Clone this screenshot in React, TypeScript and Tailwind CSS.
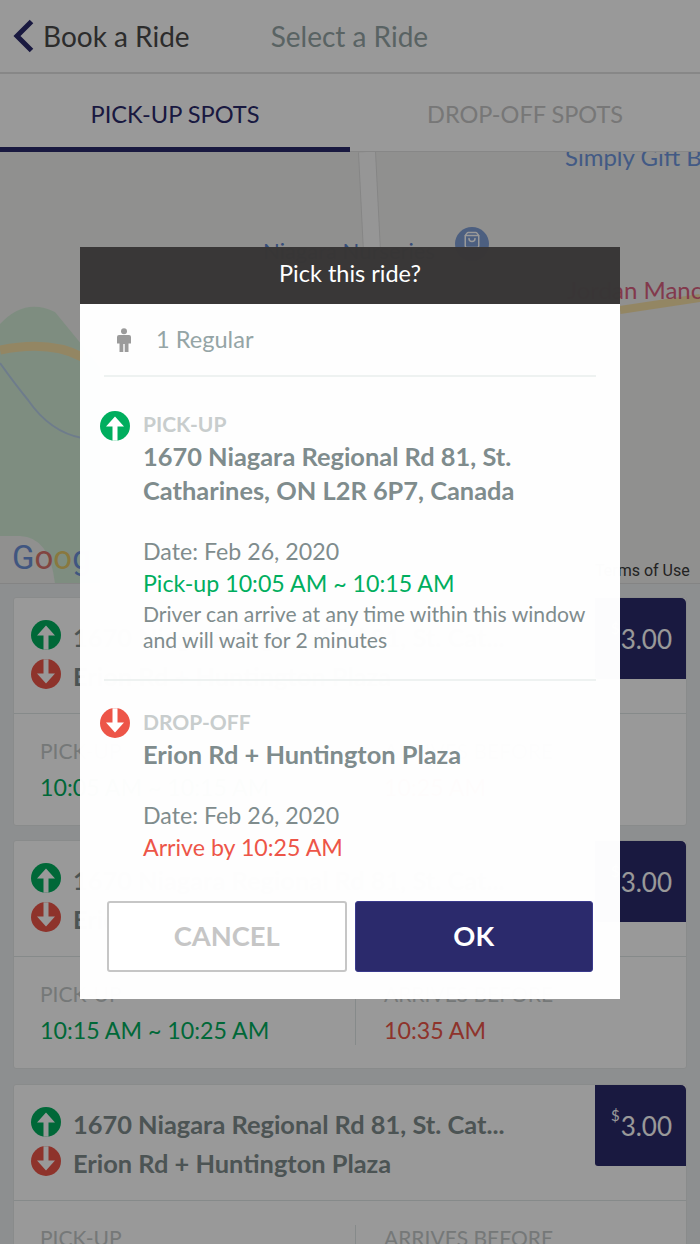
import { ShoppingBag } from 'lucide-react';

const lato = { fontFamily: 'Lato, "Noto Sans", sans-serif' };

function PickupIcon({ size = 30 }: { size?: number }) {
  return (
    <svg width={size} height={size} viewBox="0 0 30 30" className="shrink-0">
      <circle cx="15" cy="15" r="15" fill="#00ae5e" />
      <path d="M15 5.5 L24 15.5 H17.5 V29.8 H12.5 V15.5 H6 Z" fill="#fff" />
    </svg>
  );
}

function DropoffIcon({ size = 30 }: { size?: number }) {
  return (
    <svg width={size} height={size} viewBox="0 0 30 30" className="shrink-0">
      <circle cx="15" cy="15" r="15" fill="#ed5548" />
      <path d="M15 24.5 L24 14.5 H17.5 V0.2 H12.5 V14.5 H6 Z" fill="#fff" />
    </svg>
  );
}

function PersonIcon() {
  return (
    <svg width="16" height="24" viewBox="0 0 16 24" fill="#9b9b9b">
      <circle cx="8" cy="3.2" r="3" />
      <path d="M3 7 H13 A2 2 0 0 1 15 9 V15.5 H12.5 V24 H8.7 V16 H7.3 V24 H3.5 V15.5 H1 V9 A2 2 0 0 1 3 7 Z" />
    </svg>
  );
}

function RideCard({ time, arrive, className }: { time: string; arrive: string; className: string }) {
  return (
    <div className={`mx-[13px] bg-white rounded-[3px] shrink-0 h-[229px] flex flex-col border border-[#e4e8e8] ${className}`}>
      <div className="h-[116px] flex justify-between border-b border-[#dfe6e6] shrink-0">
        <div className="pl-[17px] pt-[22px] flex flex-col gap-[9px]">
          <div className="flex items-center gap-[12px]">
            <PickupIcon />
            <span className="h-[30px] text-[25.4px] leading-[34px] font-bold text-[#7f8c8d] whitespace-nowrap">1670 Niagara Regional Rd 81, St. Cat...</span>
          </div>
          <div className="flex items-center gap-[12px]">
            <DropoffIcon />
            <span className="h-[30px] text-[25.4px] leading-[34px] font-bold text-[#7f8c8d] whitespace-nowrap">Erion Rd + Huntington Plaza</span>
          </div>
        </div>
        <div className="w-[91px] h-[81px] bg-[#2b2a6c] rounded-tr-[5px] rounded-bl-[3px] flex items-center justify-center pt-[2px] pl-[2px] text-white text-[26px] shrink-0">
          <sup className="text-[15px] -mt-[8px] mr-[1px]">$</sup>3.00
        </div>
      </div>
      <div className="flex pt-[24px] pb-[24px] flex-1">
        <div className="w-[342px] pl-[26px] border-r border-[#dfe6e6]">
          <div className="text-[21px] leading-[26px] text-[#c4c9c9]">PICK-UP</div>
          <div className="text-[23.2px] leading-[30px] mt-[8px] text-[#00ae5e] whitespace-nowrap">{time}</div>
        </div>
        <div className="pl-[28px]">
          <div className="text-[21px] leading-[26px] text-[#c4c9c9]">ARRIVES BEFORE</div>
          <div className="text-[23.2px] leading-[30px] mt-[8px] text-[#ed5548]">{arrive}</div>
        </div>
      </div>
    </div>
  );
}

function MapArea() {
  return (
    <div className="relative h-[432px] bg-[#f0f0ee] overflow-hidden border-b border-[#dcdcdc]">
      <svg width="700" height="432" className="absolute inset-0">
        <path d="M0 172 Q25 145 55 160 L100 215 V432 H55 Q50 385 20 384 H0 Z" fill="#d2ecd6" />
        <path d="M0 198 Q50 188 82 205" stroke="#f6dfa6" strokeWidth="9" fill="none" />
        <path d="M0 211 Q15 232 28 248 Q50 280 82 286" stroke="#b8cfe8" strokeWidth="2" fill="none" />
        <path d="M620 158 L700 146" stroke="#f6dfa6" strokeWidth="8" fill="none" />
        <path d="M367 0 L372 100" stroke="#dedede" strokeWidth="18" fill="none" />
        <path d="M367 0 L372 100" stroke="#fbfbfb" strokeWidth="16" fill="none" />
        <circle cx="472" cy="92" r="17" fill="#7f9ed6" />
      </svg>
      <ShoppingBag className="absolute left-[463px] top-[79px] text-white" size={18} />
      <span className="absolute left-[565px] -top-[9px] text-[24px] leading-[28px] text-[#6f97de] whitespace-nowrap">Simply Gift B</span>
      <span className="absolute left-[263px] top-[86px] text-[22px] leading-[26px] text-[#5b82cc] whitespace-nowrap">Niagara Nurseries</span>
      <span className="absolute left-[567px] top-[124px] text-[24px] leading-[28px] text-[#d9607f] whitespace-nowrap">Jordan Manc</span>
      <span className="absolute left-[12px] top-[387px] text-[33px] leading-[38px] whitespace-nowrap" style={{ fontFamily: 'Roboto, sans-serif' }}>
        <span className="text-[#6b8fd6]">G</span>
        <span className="text-[#d9736b]">o</span>
        <span className="text-[#e5c868]">o</span>
        <span className="text-[#6b8fd6]">g</span>
      </span>
      <span className="absolute left-[595px] top-[408px] text-[16px] leading-[22px] text-[#3a3a3a] whitespace-nowrap" style={{ fontFamily: 'Roboto, sans-serif' }}>Terms of Use</span>
    </div>
  );
}

export default function App() {
  return (
    <div className="relative w-[700px] h-[1244px] overflow-hidden bg-[#eceef0]" style={lato}>
      {/* page under the dialog */}
      <div className="h-[74px] bg-white border-b-2 border-[#e2e2e2] flex items-center">
        <svg width="22" height="34" viewBox="0 0 22 34" className="ml-[13px] mb-[1px]">
          <path d="M18.5 2.5 L4 17 L18.5 31.5" fill="none" stroke="#2b2a6c" strokeWidth="5" />
        </svg>
        <span className="ml-[8px] text-[28px] text-[#4a4a4a] whitespace-nowrap">Book a Ride</span>
        <span className="ml-[81px] text-[28px] text-[#95a5a6] whitespace-nowrap">Select a Ride</span>
      </div>
      <div className="h-[78px] bg-white flex border-b border-[#e2e2e2]">
        <div className="w-[350px] border-b-[5px] border-[#2b2a6c] -mb-px flex items-center justify-center pt-[9px] text-[23.6px] text-[#2b2a6c]">PICK-UP SPOTS</div>
        <div className="w-[350px] flex items-center justify-center pt-[4px] text-[23.5px] text-[#c6c6c6]">DROP-OFF SPOTS</div>
      </div>
      <MapArea />
      <div className="pt-[13px]">
        <RideCard time="10:05 AM ~ 10:15 AM" arrive="10:25 AM" className="mb-[14px]" />
        <RideCard time="10:15 AM ~ 10:25 AM" arrive="10:35 AM" className="mb-[15px]" />
        <RideCard time="10:25 AM ~ 10:35 AM" arrive="10:45 AM" className="mb-[14px]" />
      </div>

      {/* overlay + dialog */}
      <div className="absolute inset-0 bg-black/40" />
      <div className="absolute left-[80px] top-[247px] w-[540px] h-[752px] flex flex-col">
        <div className="h-[57px] shrink-0 bg-[#383636]/[0.99] flex items-center justify-center pb-[4px] text-white text-[23.5px]">Pick this ride?</div>
        <div className="flex-1 bg-white/[0.99] px-[24px] flex flex-col">
          <div className="h-[73px] border-b-2 border-[#eef2f1] flex items-center shrink-0">
            <div className="ml-[12px] w-[16px] flex"><PersonIcon /></div>
            <span className="ml-[24px] text-[23.6px] text-[#95a5a6]">1 Regular</span>
          </div>
          <div className="h-[304px] border-b-2 border-[#eef2f1] shrink-0 flex pt-[34px]">
            <div className="-ml-[4px] w-[43px] shrink-0"><PickupIcon /></div>
            <div>
              <div className="text-[21px] leading-[26px] font-bold text-[#c8cdcd]">PICK-UP</div>
              <div className="text-[25.4px] leading-[34px] font-bold text-[#7f8c8d] mt-[2px] w-[400px]">1670 Niagara Regional Rd 81, St. Catharines, ON L2R 6P7, Canada</div>
              <div className="text-[23.2px] leading-[32px] text-[#7f8c8d] mt-[28px]">Date: Feb 26, 2020</div>
              <div className="text-[23.2px] leading-[32px] text-[#00ae5e]">Pick-up 10:05 AM ~ 10:15 AM</div>
              <div className="text-[21.15px] leading-[26px] text-[#7f8c8d] mt-[2px] whitespace-nowrap">Driver can arrive at any time within this window<br />and will wait for 2 minutes</div>
            </div>
          </div>
          <div className="flex pt-[27px] shrink-0">
            <div className="-ml-[4px] w-[43px] shrink-0"><DropoffIcon /></div>
            <div className="pt-[1px]">
              <div className="text-[21px] leading-[26px] font-bold text-[#c8cdcd]">DROP-OFF</div>
              <div className="text-[25.4px] leading-[34px] font-bold text-[#7f8c8d] mt-[2px]">Erion Rd + Huntington Plaza</div>
              <div className="text-[23.2px] leading-[32px] text-[#7f8c8d] mt-[28px]">Date: Feb 26, 2020</div>
              <div className="text-[23.2px] leading-[32px] text-[#ed5548]">Arrive by 10:25 AM</div>
            </div>
          </div>
          <div className="flex gap-[8px] mx-[3px] mt-[38px]">
            <button className="w-[240px] h-[71px] bg-white border-2 border-[#c6c6c6] rounded-[3px] text-[27.3px] font-bold text-[#c6c6c6]">CANCEL</button>
            <button className="w-[239px] h-[71px] bg-[#2b2a6c] border border-[#3a3a8c] rounded-[3px] text-[27.3px] font-bold text-white">OK</button>
          </div>
        </div>
      </div>
    </div>
  );
}
